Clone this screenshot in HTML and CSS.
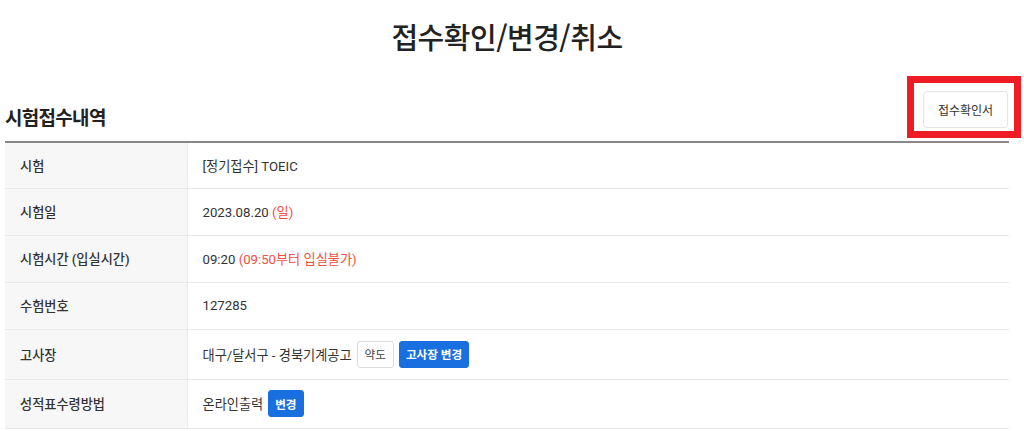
FILE: index.html
```html
<!DOCTYPE html>
<html lang="ko">
<head>
    <meta charset="UTF-8">
    <meta name="viewport" content="width=device-width, initial-scale=1.0">
    <title>접수확인/변경/취소</title>
    <link rel="stylesheet" href="styles.css">
</head>
<body>
    <div class="container">
        <h1 class="page-title">접수확인/변경/취소</h1>

        <div class="section-head">
            <h2>시험접수내역</h2>
            <div class="btn-wrap">
                <button class="btn btn-line btn-print">접수확인서</button>
                <span class="mark"></span>
            </div>
        </div>

        <table class="info-table">
            <tr>
                <th>시험</th>
                <td>[정기접수] TOEIC</td>
            </tr>
            <tr>
                <th>시험일</th>
                <td>2023.08.20 <span class="red">(일)</span></td>
            </tr>
            <tr>
                <th>시험시간 (입실시간)</th>
                <td>09:20 <span class="red">(09:50부터 입실불가)</span></td>
            </tr>
            <tr>
                <th>수험번호</th>
                <td>127285</td>
            </tr>
            <tr class="tall">
                <th>고사장</th>
                <td>
                    <div class="inline">
                        <span>대구/달서구 - 경북기계공고</span>
                        <button class="btn btn-line">약도</button>
                        <button class="btn btn-blue">고사장 변경</button>
                    </div>
                </td>
            </tr>
            <tr class="tall">
                <th>성적표수령방법</th>
                <td>
                    <div class="inline">
                        <span>온라인출력</span>
                        <button class="btn btn-blue">변경</button>
                    </div>
                </td>
            </tr>
        </table>
    </div>
</body>
</html>
```

FILE: styles.css
```css
* {
    margin: 0;
    padding: 0;
    box-sizing: border-box;
}

body {
    font-family: Roboto, "Noto Sans CJK KR", sans-serif;
    background: #fff;
    color: #333;
}

.container {
    margin: 0 15px 0 5px;
}

.page-title {
    text-align: center;
    font-family: "Noto Sans CJK KR", sans-serif;
    font-size: 29px;
    font-weight: 500;
    color: #222;
    line-height: 40px;
    padding-top: 16px;
    letter-spacing: -0.5px;
}

.section-head {
    display: flex;
    justify-content: space-between;
    align-items: flex-end;
    margin-top: 35px;
    padding-bottom: 13px;
}

.section-head h2 {
    font-family: "Noto Sans CJK KR", sans-serif;
    font-size: 19px;
    font-weight: 700;
    color: #222;
    line-height: 24px;
    margin-bottom: -1px;
    letter-spacing: -0.7px;
}

.btn-wrap {
    position: relative;
    margin-right: 1px;
}

/* 강조 표시 박스 */
.mark {
    position: absolute;
    left: -16px;
    top: -15px;
    right: -13px;
    bottom: -10px;
    border: 7px solid #ee1c25;
    pointer-events: none;
}

.btn {
    font-family: Roboto, "Noto Sans CJK KR", sans-serif;
    font-size: 11.6px;
    border-radius: 3px;
    cursor: pointer;
    height: 27px;
    padding: 0 6px;
}

.btn-line {
    background: #fff;
    border: 1px solid #ddd;
    color: #444;
    padding: 0 7px;
}

.btn-blue {
    background: #1a6fe0;
    border: 1px solid #1a6fe0;
    color: #fff;
    font-weight: 700;
}

.btn-print {
    width: 85px;
    height: 37px;
    font-size: 12px;
    border-color: #e4e4e4;
    border-radius: 4px;
    color: #333;
}

.info-table {
    width: 100%;
    border-collapse: collapse;
    border-top: 2px solid #888;
    font-size: 13.2px;
}

.info-table th,
.info-table td {
    height: 47px;
    border-bottom: 1px solid #e9e9e9;
    text-align: left;
    padding: 0 15px;
}

.info-table th {
    width: 182px;
    background: #f7f7f7;
    font-weight: 500;
    color: #333;
    border-right: 1px solid #eaeaea;
}

.info-table td {
    font-weight: 400;
    color: #333;
}

.info-table tr:first-child th,
.info-table tr:first-child td {
    height: 46px;
}

.info-table tr.tall th,
.info-table tr.tall td {
    height: 50px;
}

.info-table tr.tall:last-child th,
.info-table tr.tall:last-child td {
    height: 49px;
}

.inline {
    display: flex;
    align-items: center;
    gap: 5px;
}

.red {
    color: #f0503f;
}
```
